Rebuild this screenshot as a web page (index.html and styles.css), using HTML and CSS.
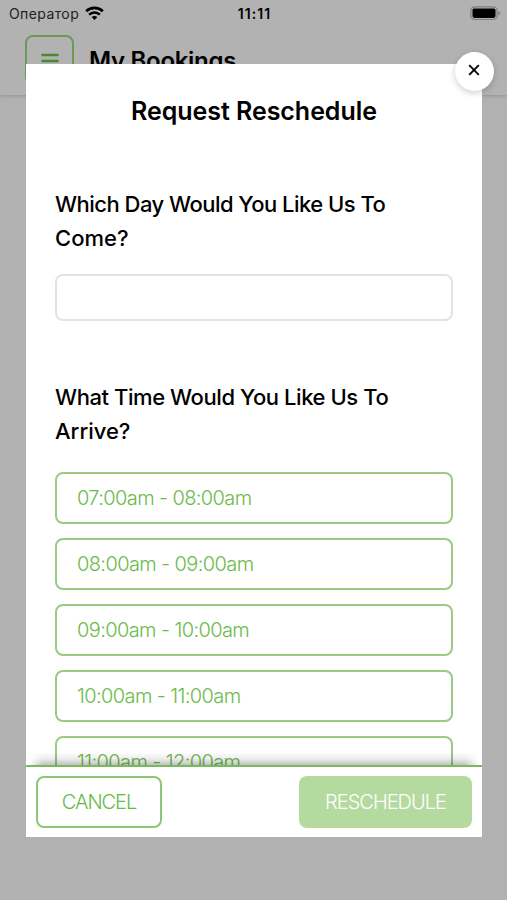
FILE: index.html
```html
<!DOCTYPE html>
<html lang="en">
<head>
  <meta charset="UTF-8">
  <meta name="viewport" content="width=device-width, initial-scale=1.0">
  <title>My Bookings</title>
  <link rel="stylesheet" href="styles.css">
</head>
<body>
  <header class="page-header">
    <div class="status-bar">
      <div class="carrier">
        <span class="carrier-name">Оператор</span>
        <svg width="19" height="15" viewBox="0 0 19 15">
          <path d="M1.2 5.2 A12 12 0 0 1 17.8 5.2" fill="none" stroke="#000" stroke-width="2.7"/>
          <path d="M4.1 8.6 A7.8 7.8 0 0 1 14.9 8.6" fill="none" stroke="#000" stroke-width="2.4"/>
          <path d="M6.6 11.1 A4.6 4.6 0 0 1 12.4 11.1 L9.5 14 Z" fill="#000"/>
        </svg>
      </div>
      <span class="clock">11:11</span>
      <svg class="battery" width="31" height="15" viewBox="0 0 31 15">
        <rect x="0.9" y="0.9" width="26.2" height="12.6" rx="3.8" fill="none" stroke="#7d7d7d" stroke-width="1.2"/>
        <rect x="2.5" y="2.5" width="23" height="9.4" rx="1.8" fill="#000"/>
        <path d="M28.5 4.9 Q30.2 5.6 30.2 7.2 Q30.2 8.8 28.5 9.5 Z" fill="#7d7d7d"/>
      </svg>
    </div>
    <div class="nav">
      <button class="menu-button" aria-label="Menu">
        <svg width="18" height="16" viewBox="0 0 18 16">
          <path d="M1.5 2 H16.5 M1.5 8 H16.5 M1.5 14 H16.5" stroke="#4d8733" stroke-width="2.5" stroke-linecap="round"/>
        </svg>
      </button>
      <h1>My Bookings</h1>
    </div>
  </header>

  <div class="modal">
    <button class="close-button" aria-label="Close">
      <svg width="12" height="12" viewBox="0 0 12 12">
        <path d="M1.2 1.2 L10.8 10.8 M10.8 1.2 L1.2 10.8" stroke="#000" stroke-width="1.9"/>
      </svg>
    </button>
    <div class="modal-body">
      <h2>Request Reschedule</h2>
      <h3><span class="day-label">Which Day Would You Like Us To</span><br>Come?</h3>
      <input class="day-input" type="text" aria-label="Day">
      <h3><span class="time-label">What Time Would You Like Us To</span><br>Arrive?</h3>
      <div class="slots">
        <button class="slot">07:00am - 08:00am</button>
        <button class="slot">08:00am - 09:00am</button>
        <button class="slot">09:00am - 10:00am</button>
        <button class="slot">10:00am - 11:00am</button>
        <button class="slot">11:00am - 12:00am</button>
      </div>
    </div>
    <div class="modal-footer">
      <button class="cancel-button">CANCEL</button>
      <button class="reschedule-button">RESCHEDULE</button>
    </div>
  </div>
</body>
</html>
```

FILE: styles.css
```css
* {
  box-sizing: border-box;
}

body {
  margin: 0;
  height: 900px;
  overflow: hidden;
  background-color: #b1b1b1;
  font-family: Inter, sans-serif;
  color: #000;
}

button {
  font-family: inherit;
  background: none;
  padding: 0;
}

h1,
h2,
h3 {
  margin: 0;
}

/* Header behind the modal */
.page-header {
  height: 95px;
  background-color: #b2b2b2;
  box-shadow: 0 1px 3px rgba(0, 0, 0, 0.18);
}

.status-bar {
  display: grid;
  grid-template-columns: 1fr auto 1fr;
  align-items: center;
  height: 27px;
  padding: 0 6px 0 9px;
}

.carrier {
  display: flex;
  align-items: center;
  gap: 6px;
}

.carrier-name {
  font-size: 14px;
  letter-spacing: 0.4px;
  color: #222;
}

.clock {
  margin-right: 1px;
  font-size: 14px;
  font-weight: 600;
  letter-spacing: 1.1px;
}

.battery {
  justify-self: end;
}

.nav {
  display: flex;
  align-items: center;
  gap: 15px;
  padding: 8px 25px 0;
}

.menu-button {
  display: flex;
  align-items: center;
  justify-content: center;
  width: 49px;
  height: 50px;
  padding-top: 1px;
  border: 2px solid #6b9a55;
  border-radius: 8px;
}

h1 {
  font-size: 24px;
  font-weight: 600;
  letter-spacing: -0.3px;
}

/* Modal */
.modal {
  position: absolute;
  top: 64px;
  left: 26px;
  display: flex;
  flex-direction: column;
  width: 456px;
  height: 773px;
  background-color: #fff;
}

.close-button {
  position: absolute;
  top: -12px;
  right: -12px;
  z-index: 2;
  display: flex;
  align-items: center;
  justify-content: center;
  width: 39px;
  height: 39px;
  padding: 0 1px 4px 0;
  border: none;
  border-radius: 50%;
  background-color: #fff;
  box-shadow: 0 2px 6px rgba(0, 0, 0, 0.2);
}

.modal-body {
  flex: 1;
  min-height: 0;
  overflow: hidden;
  padding: 30px 29px 0;
}

h2 {
  margin-bottom: 58px;
  font-size: 25px;
  font-weight: 600;
  line-height: 35px;
  letter-spacing: -0.05px;
  text-align: center;
}

h3 {
  font-size: 22px;
  font-weight: 500;
  line-height: 34px;
  white-space: nowrap;
}

.day-label {
  letter-spacing: -0.52px;
}

.time-label {
  letter-spacing: -0.43px;
}

.day-input {
  display: block;
  width: 398px;
  height: 47px;
  margin: 19px 0 59px;
  border: 2px solid #e2e3e3;
  border-radius: 8px;
}

.slots {
  display: flex;
  flex-direction: column;
  gap: 14px;
  margin-top: 24px;
}

.slot {
  flex-shrink: 0;
  width: 398px;
  height: 52px;
  padding-left: 20px;
  border: 2px solid #99cb82;
  border-radius: 8px;
  font-size: 20px;
  font-weight: 300;
  letter-spacing: -0.61px;
  text-align: left;
  color: #6cba4b;
}

/* Modal footer */
.modal-footer {
  position: relative;
  display: flex;
  justify-content: space-between;
  height: 72px;
  padding: 9px 10px 0;
  border-top: 2px solid #78bb5b;
  background-color: #fff;
}

/* Shadow over the scrolled slots */
.modal-footer::before {
  content: "";
  position: absolute;
  right: 3px;
  bottom: 100%;
  left: 3px;
  height: 13px;
  margin-bottom: 2px;
  background: linear-gradient(to top, rgba(0, 0, 0, 0.24), rgba(0, 0, 0, 0.07) 50%, rgba(0, 0, 0, 0));
  mask-image: linear-gradient(to right, transparent, #000 14px, #000 calc(100% - 14px), transparent);
}

.cancel-button,
.reschedule-button {
  height: 52px;
  border-radius: 8px;
  font-size: 20px;
  font-weight: 300;
  letter-spacing: -1px;
}

.cancel-button {
  width: 126px;
  border: 2px solid #8dc775;
  color: #68b847;
}

.reschedule-button {
  width: 173px;
  border: none;
  background-color: #b4da9f;
  color: #fff;
}
```
